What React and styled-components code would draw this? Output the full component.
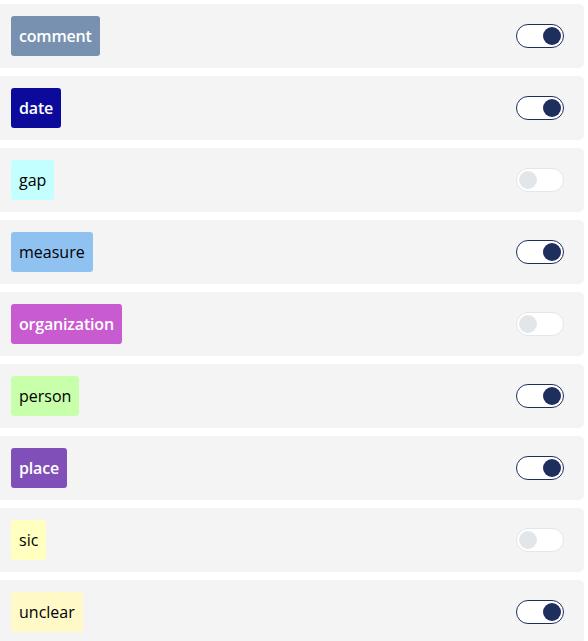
import React, { useState } from "react";
import styled, { createGlobalStyle } from "styled-components";

const Global = createGlobalStyle`
  html, body { margin: 0; padding: 0; background: #ffffff; }
  body { font-family: "Open Sans", "Noto Sans", sans-serif; }
`;

const List = styled.div`
  display: flex;
  flex-direction: column;
  gap: 8px;
  padding: 4px 4px 0 0;
`;

const Row = styled.div`
  display: flex;
  align-items: center;
  justify-content: space-between;
  height: 64px;
  padding: 0 20px 0 11px;
  background: #f4f4f4;
  border-radius: 0 5px 5px 0;
  box-sizing: border-box;
`;

const Tag = styled.span`
  display: inline-flex;
  align-items: center;
  height: 40px;
  padding: 0 8px;
  border-radius: 3px;
  background: ${(p) => p.$bg};
  color: ${(p) => p.$fg};
  font-size: 16px;
  font-weight: ${(p) => (p.$light ? 600 : 400)};
  letter-spacing: ${(p) => (p.$light ? "-0.18px" : "0")};
  line-height: 1;
  box-sizing: border-box;
`;

const Switch = styled.button`
  position: relative;
  width: 48px;
  height: 24px;
  padding: 0;
  border-radius: 12px;
  border: 1px solid ${(p) => (p.$on ? "#1e2f5e" : "#e3e5ea")};
  background: #ffffff;
  cursor: pointer;
  box-sizing: border-box;
`;

const Knob = styled.span`
  position: absolute;
  top: 2px;
  left: ${(p) => (p.$on ? "26px" : "2px")};
  width: 18px;
  height: 18px;
  border-radius: 50%;
  background: ${(p) => (p.$on ? "#1e2f5e" : "#e2e5ea")};
`;

const items = [
  { name: "comment", bg: "#7891b0", fg: "#ffffff", on: true },
  { name: "date", bg: "#0c0a9b", fg: "#ffffff", on: true },
  { name: "gap", bg: "#c3ffff", fg: "#000000", on: false },
  { name: "measure", bg: "#8fc2f0", fg: "#000000", on: true },
  { name: "organization", bg: "#c95bd0", fg: "#ffffff", on: false },
  { name: "person", bg: "#c7ffab", fg: "#000000", on: true },
  { name: "place", bg: "#804fb8", fg: "#ffffff", on: true },
  { name: "sic", bg: "#ffffc0", fg: "#000000", on: false },
  { name: "unclear", bg: "#fff9c8", fg: "#000000", on: true },
];

export default function App() {
  const [state, setState] = useState(items.map((i) => i.on));
  return (
    <>
      <Global />
      <List>
        {items.map((it, idx) => (
          <Row key={it.name}>
            <Tag $bg={it.bg} $fg={it.fg} $light={it.fg === "#ffffff"}>
              {it.name}
            </Tag>
            <Switch
              $on={state[idx]}
              onClick={() =>
                setState((s) => s.map((v, j) => (j === idx ? !v : v)))
              }
            >
              <Knob $on={state[idx]} />
            </Switch>
          </Row>
        ))}
      </List>
    </>
  );
}
